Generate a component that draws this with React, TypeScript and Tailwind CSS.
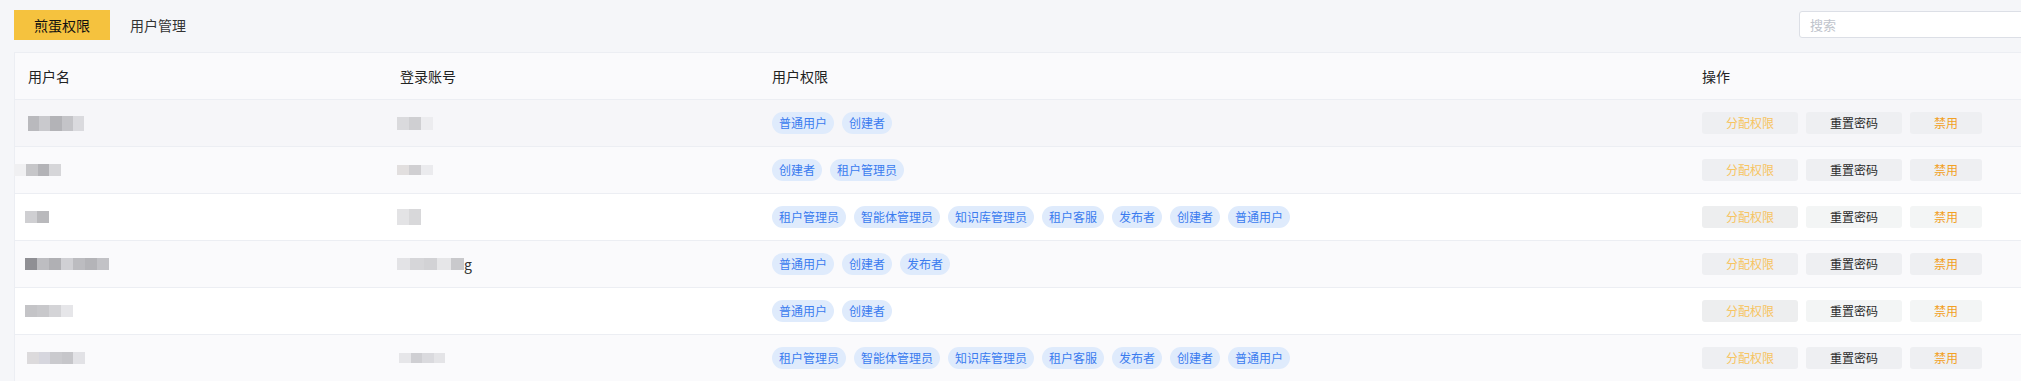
import React from "react";

type Row = {
  name: { w: number; h: number; shades: string[]; ml?: number };
  account?: { w: number; h: number; shades: string[]; ml?: number; tail?: string };
  roles: string[];
  tone: "hover" | "stripe" | "white";
};

const FONT = "font-['Noto_Sans_CJK_SC','Noto_Sans',sans-serif]";

const ALL_ROLES = ["租户管理员", "智能体管理员", "知识库管理员", "租户客服", "发布者", "创建者", "普通用户"];

const rows: Row[] = [
  {
    name: { w: 56, h: 15, shades: ["#b9b9bd", "#c9c9cd", "#b3b3b7", "#c4c4c8", "#dadade"] },
    account: { w: 36, h: 13, shades: ["#dadadd", "#cfcfd2", "#ececef"], ml: -3 },
    roles: ["普通用户", "创建者"],
    tone: "hover",
  },
  {
    name: { w: 47, h: 12, shades: ["#f0f0f2", "#c6c6c9", "#b3b3b7", "#d6d6d9"], ml: -14 },
    account: { w: 36, h: 10, shades: ["#e2dfdf", "#d0cfd2", "#ebebee"], ml: -3 },
    roles: ["创建者", "租户管理员"],
    tone: "stripe",
  },
  {
    name: { w: 24, h: 12, shades: ["#cfcfd2", "#b9b9bc"], ml: -3 },
    account: { w: 24, h: 16, shades: ["#e3e3e5", "#d8d8da"], ml: -3 },
    roles: ALL_ROLES,
    tone: "white",
  },
  {
    name: { w: 84, h: 12, shades: ["#8f8f94", "#bdbdc1", "#b0b0b4", "#d0d0d4", "#bcbcc0", "#b4b4b8", "#c2c2c6"], ml: -3 },
    account: { w: 67, h: 12, shades: ["#e3e3e6", "#d6d6d9", "#d2d2d5", "#e6e6e8", "#c9c9cc"], ml: -3, tail: "g" },
    roles: ["普通用户", "创建者", "发布者"],
    tone: "stripe",
  },
  {
    name: { w: 48, h: 12, shades: ["#c4c4c7", "#c8c8cb", "#d4d4d7", "#e6e6e9"], ml: -3 },
    roles: ["普通用户", "创建者"],
    tone: "white",
  },
  {
    name: { w: 58, h: 12, shades: ["#dcdadc", "#d6d6de", "#cacace", "#c6c6ca", "#e2e2e6"], ml: -1 },
    account: { w: 46, h: 10, shades: ["#e6e6e9", "#cfcfd3", "#dadade", "#e4e4e7"], ml: -1 },
    roles: ALL_ROLES,
    tone: "stripe",
  },
];

function Mosaic({ w, h, shades, ml = 0 }: { w: number; h: number; shades: string[]; ml?: number }) {
  return (
    <div className="flex" style={{ width: w, height: h, marginLeft: ml }}>
      {shades.map((c, i) => (
        <div key={i} className="flex-1 h-full" style={{ backgroundColor: c }} />
      ))}
    </div>
  );
}

function Chip({ label }: { label: string }) {
  return (
    <span className="inline-flex h-[22px] items-center rounded-full bg-[#dfebfc] px-[7px] text-xs leading-none text-[#3a7bef]">
      {label}
    </span>
  );
}

function ActionButton({ label, className }: { label: string; className: string }) {
  return <button className={`h-[22px] w-full rounded-[3px] text-xs leading-none ${className}`}>{label}</button>;
}

export default function App() {
  return (
    <div className={`w-[2021px] h-[381px] overflow-hidden bg-[#f5f6f9] ${FONT}`}>
      {/* tabs + search */}
      <div className="flex h-[52px] items-start pt-[10px] pl-[14px]">
        <button className="h-[30px] bg-[#f5c23e] px-5 text-sm text-[#111]">煎蛋权限</button>
        <button className="h-[30px] px-5 text-sm text-[#333]">用户管理</button>
        <div className="ml-auto mt-px -mr-[18px] flex h-[27px] w-[240px] shrink-0 items-center rounded-[3px] border border-[#dcdfe6] bg-white pl-[10px] text-[13px] text-[#c0c4cc]">
          搜索
        </div>
      </div>

      {/* table */}
      <div className="ml-[14px] w-[2030px] border-l border-t border-[#eceef3]">
        <div className="grid h-[47px] grid-cols-[372px_372px_930px_1fr] items-center border-b border-[#eceef3] bg-[#fafafc] text-sm text-[#222]">
          <div className="px-[13px]">用户名</div>
          <div className="px-[13px]">登录账号</div>
          <div className="px-[13px]">用户权限</div>
          <div className="px-[13px]">操作</div>
        </div>

        {rows.map((r, i) => {
          const rowBg = r.tone === "hover" ? "bg-[#f6f6f9]" : r.tone === "stripe" ? "bg-[#fafafc]" : "bg-white";
          const btnA = r.tone === "white" ? "bg-[#edeeef]" : "bg-[#eeeff2]";
          const btnB = r.tone === "white" ? "bg-[#f3f5f5]" : "bg-[#eeeff2]";
          return (
            <div
              key={i}
              className={`grid h-[47px] grid-cols-[372px_372px_930px_1fr] items-center border-b border-[#eceef3] text-sm text-[#333] ${rowBg}`}
            >
              <div className="flex items-center px-[13px]">
                <Mosaic {...r.name} />
              </div>
              <div className="flex items-center px-[13px]">
                {r.account && (
                  <>
                    <Mosaic {...r.account} />
                    {r.account.tail && <span className="text-sm leading-none text-[#333]">{r.account.tail}</span>}
                  </>
                )}
              </div>
              <div className="flex items-center gap-2 px-[13px]">
                {r.roles.map((role, j) => (
                  <Chip key={j} label={role} />
                ))}
              </div>
              <div className="flex items-center gap-2 px-[13px]">
                <div className="flex w-[96px]">
                  <ActionButton label="分配权限" className={`text-[#f7c461] ${btnA}`} />
                </div>
                <div className="flex w-[96px]">
                  <ActionButton label="重置密码" className={`text-[#2b2b2b] ${btnB}`} />
                </div>
                <div className="flex w-[72px]">
                  <ActionButton label="禁用" className={`text-[#f2a024] ${btnB}`} />
                </div>
              </div>
            </div>
          );
        })}
      </div>
    </div>
  );
}
